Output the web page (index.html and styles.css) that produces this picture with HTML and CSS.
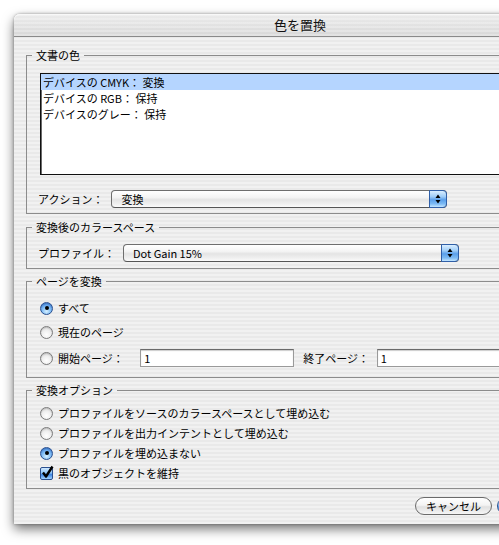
FILE: index.html
```html
<!DOCTYPE html>
<html lang="ja">
<head>
<meta charset="utf-8">
<title>色を置換</title>
<link rel="stylesheet" href="styles.css">
</head>
<body>
<div class="window">
  <div class="titlebar">色を置換</div>
  <div class="content">
    <fieldset class="group g1">
      <legend>文書の色</legend>
      <div class="list">
        <div class="row selected">デバイスの CMYK： 変換</div>
        <div class="row">デバイスの RGB： 保持</div>
        <div class="row">デバイスのグレー： 保持</div>
      </div>
      <div class="field-row action-row">
        <span class="label">アクション：</span>
        <div class="popup">
          <span class="popup-text">変換</span>
          <span class="popup-arrows"><svg width="16" height="16" viewBox="0 0 16 16"><path d="M8 3.5 L10.5 7 L5.5 7 Z M8 12.5 L10.5 9 L5.5 9 Z" fill="#000"/></svg></span>
        </div>
      </div>
    </fieldset>

    <fieldset class="group g2">
      <legend>変換後のカラースペース</legend>
      <div class="field-row">
        <span class="label">プロファイル：</span>
        <div class="popup">
          <span class="popup-text latin">Dot Gain 15%</span>
          <span class="popup-arrows"><svg width="16" height="16" viewBox="0 0 16 16"><path d="M8 3.5 L10.5 7 L5.5 7 Z M8 12.5 L10.5 9 L5.5 9 Z" fill="#000"/></svg></span>
        </div>
      </div>
    </fieldset>

    <fieldset class="group g3">
      <legend>ページを変換</legend>
      <div class="opt r1"><span class="radio on"></span><span>すべて</span></div>
      <div class="opt r2"><span class="radio"></span><span>現在のページ</span></div>
      <div class="opt r3">
        <span class="radio"></span><span class="page-label">開始ページ：</span>
        <span class="textfield start">1</span>
        <span class="page-label end-label">終了ページ：</span>
        <span class="textfield end">1</span>
      </div>
    </fieldset>

    <fieldset class="group g4">
      <legend>変換オプション</legend>
      <div class="opt opt4"><span class="radio"></span><span>プロファイルをソースのカラースペースとして埋め込む</span></div>
      <div class="opt opt4"><span class="radio"></span><span>プロファイルを出力インテントとして埋め込む</span></div>
      <div class="opt opt4"><span class="radio on"></span><span>プロファイルを埋め込まない</span></div>
      <div class="opt opt4"><span class="check"><svg width="15" height="15" viewBox="0 0 15 15"><path d="M3 7.5 L6 11.5 L12.5 1.5" fill="none" stroke="#000" stroke-width="2.4" stroke-linejoin="round"/></svg></span><span>黒のオブジェクトを維持</span></div>
    </fieldset>

    <div class="buttons">
      <span class="btn">キャンセル</span>
      <span class="btn default" aria-label="OK"></span>
    </div>
  </div>
</div>
</body>
</html>
```

FILE: styles.css
```css
* { box-sizing: border-box; }
html, body { margin: 0; padding: 0; }
body {
  background: #fff;
  width: 499px;
  height: 545px;
  overflow: hidden;
  font-family: "Noto Sans CJK JP", "Noto Sans", sans-serif;
  font-size: 11px;
  color: #000;
}
.window {
  margin: 14px 0 0 14px;
  width: 572px;
  border-radius: 6px 6px 0 0;
  background: repeating-linear-gradient(to bottom, #f1f1f1 0, #f1f1f1 2px, #e9e9e9 2px, #e9e9e9 4px);
  box-shadow: 0 5px 12px rgba(0,0,0,0.55), 0 0 3px rgba(0,0,0,0.35);
}
.titlebar {
  height: 23px;
  border-bottom: 1px solid #8a8a8a;
  border-radius: 6px 6px 0 0;
  background:
    repeating-linear-gradient(to bottom, rgba(255,255,255,0.25) 0, rgba(255,255,255,0.25) 2px, rgba(0,0,0,0) 2px, rgba(0,0,0,0) 4px),
    linear-gradient(to bottom, #ececec, #d8d8d8);
  box-shadow: inset 0 1px 0 #f8f8f8;
  text-align: center;
  font-size: 13px;
  line-height: 22px;
  color: #111;
}
.content {
  padding: 11px 0 9px 12px;
}
.group {
  margin: 0;
  width: 548px;
  min-width: 0;
  border: 1px solid #8c8c8c;
}
.group legend {
  padding: 0 4px;
  margin-left: -8px;
  font-size: 11px;
  line-height: 14px;
}
.g1 { padding: 11px 0 5px 13px; }
.g2 { margin-top: 6px; padding: 10px 0 6px 13px; }
.g3 { margin-top: 5px; padding: 11px 0 10px 13px; }
.g4 { margin-top: 5px; padding: 6px 0 5px 13px; }

.list {
  height: 102px;
  width: 520px;
  background: #fff;
  border: 1px solid #111;
  box-shadow: inset 1px 1px 0 #6a6a6a;
}
.row {
  height: 16px;
  line-height: 16px;
  padding-left: 2px;
  white-space: nowrap;
}
.row.selected { background: #b5d5ff; }

.field-row {
  display: flex;
  align-items: center;
  height: 18px;
  margin-left: -2px;
}
.action-row { margin-top: 15px; }
.label { margin-right: 8px; white-space: nowrap; }
.popup {
  display: flex;
  width: 336px;
  height: 18px;
  border: 1px solid #6e6e6e;
  border-bottom-color: #555;
  border-radius: 4px;
  background: linear-gradient(to bottom, #ffffff 0%, #f4f4f4 40%, #e4e4e4 55%, #efefef 80%, #fafafa 100%);
}
.popup-text {
  flex: 1;
  padding-left: 9px;
  line-height: 16px;
}
.popup-arrows {
  width: 18px;
  margin: -1px -1px -1px 0;
  border: 1px solid #2f5fa8;
  border-radius: 0 4px 4px 0;
  background: linear-gradient(to bottom, #d9eeff 0%, #9fcdf8 35%, #5a9fea 55%, #7cbaf4 80%, #c4e6ff 100%);
  display: flex;
  align-items: center;
  justify-content: center;
}
.popup-arrows svg { display: block; }

.opt {
  display: flex;
  align-items: center;
  height: 18px;
  white-space: nowrap;
}
.r2 { margin-top: 6px; }
.r3 { margin-top: 8px; }
.opt4 { height: 20px; }
.radio, .check {
  flex: none;
  width: 13px;
  height: 13px;
  margin-right: 5px;
}
.radio {
  border-radius: 50%;
  border: 1px solid #7b7b7b;
  background: radial-gradient(circle at 50% 70%, #ffffff 0%, #f0f0f0 45%, #cfcfcf 100%);
  box-shadow: inset 0 1px 1px rgba(0,0,0,0.15);
  display: flex;
  align-items: center;
  justify-content: center;
}
.radio.on {
  border-color: #2a4f8e;
  background: radial-gradient(circle at 50% 75%, #d7f0ff 0%, #7fbcf5 45%, #2d6fd4 100%);
}
.radio.on::after {
  content: "";
  width: 4px;
  height: 4px;
  border-radius: 50%;
  background: #000;
}
.check {
  position: relative;
  border: 1px solid #2a4f8e;
  border-radius: 2px;
  background: linear-gradient(to bottom, #cfe8ff 0%, #8ec4f6 45%, #3f86e2 60%, #9fd2ff 100%);
}
.check svg {
  position: absolute;
  left: -1px;
  top: -3px;
}
.page-label { width: 84px; }
.end-label { width: 75px; margin-left: 9px; }
.textfield {
  height: 18px;
  background: #fff;
  border: 1px solid #9a9a9a;
  border-top-color: #6a6a6a;
  box-shadow: inset 0 1px 1px rgba(0,0,0,0.2);
  padding-left: 3px;
  line-height: 16px;
}
.textfield.start { width: 157px; }
.textfield.end { width: 200px; }

.buttons {
  margin-top: 8px;
  display: flex;
  justify-content: flex-end;
  gap: 5px;
  padding-right: 20px;
}
.btn {
  height: 18px;
  border-radius: 9px;
  border: 1px solid #6a6a6a;
  background: linear-gradient(to bottom, #ffffff 0%, #f3f3f3 45%, #e0e0e0 55%, #f5f5f5 100%);
  text-align: center;
  line-height: 16px;
  width: 77px;
}
.btn.default {
  width: 69px;
  border-color: #2a4f8e;
  background: linear-gradient(to bottom, #d9eeff 0%, #9fcdf8 40%, #5a9fea 55%, #a8d8ff 100%);
}
```
